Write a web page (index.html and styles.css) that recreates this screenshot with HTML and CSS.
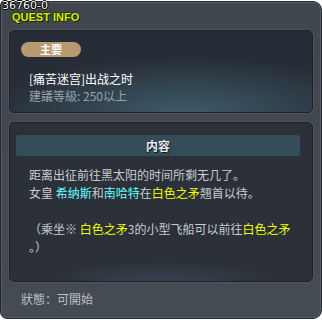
FILE: index.html
```html
<!DOCTYPE html>
<html lang="zh">
<head>
    <meta charset="UTF-8">
    <title>Quest Info</title>
    <link rel="stylesheet" href="styles.css">
</head>
<body>
    <div class="window">
        <span class="quest-id">36760-0</span>
        <div class="window-title">QUEST INFO</div>

        <div class="panel head-panel">
            <span class="tag">主要</span>
            <div class="quest-name">[痛苦迷宫]出战之时</div>
            <div class="quest-level">建議等級: 250以上</div>
        </div>

        <div class="panel body-panel">
            <div class="section-bar">内容</div>
            <p class="desc">
                距离出征前往黑太阳的时间所剩无几了。<br>
                女皇 <span class="npc">希纳斯</span>和<span class="npc">南哈特</span>在<span class="place">白色之矛</span>翘首以待。<br>
                <br>
                （乘坐※ <span class="place">白色之矛</span>3的小型飞船可以前往<span class="place">白色之矛</span><br>
                。）
            </p>
        </div>

        <div class="status">狀態：可開始</div>
    </div>
</body>
</html>
```

FILE: styles.css
```css
body {
    margin: 0;
    background-color: #ffffff;
    font-family: "Noto Sans CJK SC", "DejaVu Sans", sans-serif;
}
.window {
    position: relative;
    box-sizing: border-box;
    width: 322px;
    height: 318px;
    margin-top: 1px;
    background: linear-gradient(#40464e, #454b53);
    border: 1px solid #23282e;
    border-radius: 4px 9px 9px 7px;
    box-shadow: inset 0 0 0 1px #565c64;
}
.quest-id {
    position: absolute;
    left: 1px;
    top: -1px;
    font-family: "DejaVu Sans", sans-serif;
    font-size: 11px;
    line-height: 10px;
    color: #ffffff;
    text-shadow: 1px 0 0 #000, -1px 0 0 #000, 0 1px 0 #000, 0 -1px 0 #000;
}
.window-title {
    height: 28px;
    padding: 9px 0 0 11px;
    box-sizing: border-box;
    font-family: "Liberation Sans", sans-serif;
    font-weight: bold;
    font-size: 11px;
    line-height: 12px;
    color: #d4f000;
    text-shadow: 1px 1px 0 #1b1f10, -1px 0 0 #2a3020, 0 -1px 0 #2a3020;
}
.panel {
    margin: 0 8px;
    border: 1px solid #1c2027;
    border-radius: 5px;
    box-shadow: 0 0 0 1px #4e545c;
}
.head-panel {
    height: 83px;
    box-sizing: border-box;
    padding: 11px 0 0 11px;
    background: radial-gradient(ellipse 200px 55px at 58% 100%, #3d5a69, rgba(40, 46, 56, 0) 100%), #272d36;
}
.tag {
    display: block;
    width: 60px;
    height: 15px;
    border-radius: 8px;
    background-color: #b99a70;
    color: #ffffff;
    font-size: 11px;
    font-weight: bold;
    line-height: 15px;
    text-align: center;
}
.quest-name {
    margin-top: 13px;
    padding-left: 8px;
    font-size: 12px;
    line-height: 17px;
    color: #ffffff;
}
.quest-level {
    padding-left: 8px;
    font-size: 12px;
    line-height: 17px;
    color: #9aa2aa;
}
.body-panel {
    height: 160px;
    box-sizing: border-box;
    margin-top: 9px;
    padding: 12px 12px 0 6px;
    background: radial-gradient(ellipse 120px 20px at 50% 100%, #364450, rgba(43, 48, 57, 0) 100%), #2b3039;
}
.section-bar {
    height: 21px;
    border-radius: 3px;
    background-color: #344d59;
    color: #e6eaec;
    font-size: 12px;
    font-weight: bold;
    line-height: 21px;
    text-align: center;
    text-shadow: 1px 1px 0 #10161a;
}
.desc {
    margin: 10px 0 0 13px;
    font-size: 12px;
    line-height: 18px;
    color: #c9ccd0;
    white-space: nowrap;
}
.npc {
    color: #66ffff;
}
.place {
    color: #f0ff00;
}
.status {
    padding: 8px 0 0 20px;
    font-size: 12px;
    line-height: 18px;
    color: #bcc1c6;
}
```
